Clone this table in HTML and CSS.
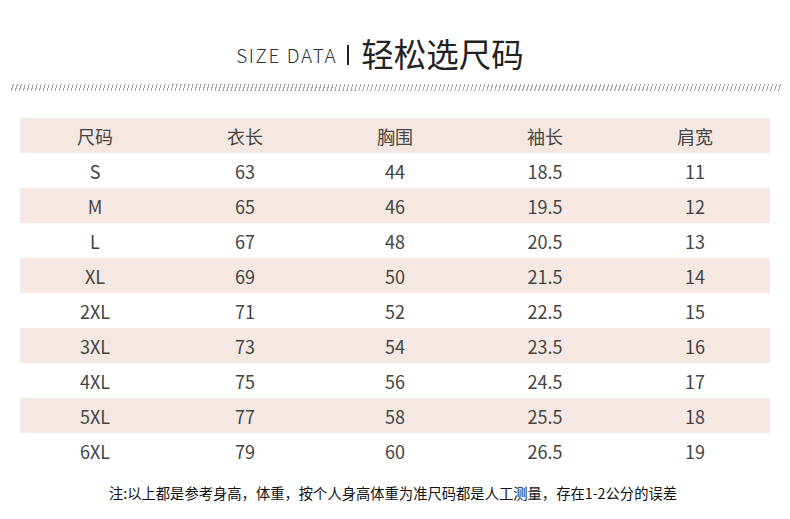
FILE: index.html
```html
<!DOCTYPE html>
<html lang="zh">
<head>
<meta charset="utf-8">
<link rel="stylesheet" href="styles.css">
</head>
<body>
<div class="page">
  <header class="title">
    <span class="title-en">SIZE DATA</span>
    <span class="title-bar"></span>
    <span class="title-cn">轻松选尺码</span>
  </header>
  <div class="slashes"></div>
  <table class="size-table">
    <thead>
      <tr><th>尺码</th><th>衣长</th><th>胸围</th><th>袖长</th><th>肩宽</th></tr>
    </thead>
    <tbody>
      <tr><td>S</td><td>63</td><td>44</td><td>18.5</td><td>11</td></tr>
      <tr><td>M</td><td>65</td><td>46</td><td>19.5</td><td>12</td></tr>
      <tr><td>L</td><td>67</td><td>48</td><td>20.5</td><td>13</td></tr>
      <tr><td>XL</td><td>69</td><td>50</td><td>21.5</td><td>14</td></tr>
      <tr><td>2XL</td><td>71</td><td>52</td><td>22.5</td><td>15</td></tr>
      <tr><td>3XL</td><td>73</td><td>54</td><td>23.5</td><td>16</td></tr>
      <tr><td>4XL</td><td>75</td><td>56</td><td>24.5</td><td>17</td></tr>
      <tr><td>5XL</td><td>77</td><td>58</td><td>25.5</td><td>18</td></tr>
      <tr><td>6XL</td><td>79</td><td>60</td><td>26.5</td><td>19</td></tr>
    </tbody>
  </table>
  <p class="note">注:以上都是参考身高，体重，按个人身高体重为准尺码都是人工测量，存在1-2公分的误差</p>
</div>
</body>
</html>
```
FILE: styles.css
```css
html, body {
  margin: 0;
  padding: 0;
  background: #fff;
}
body {
  font-family: "Noto Sans CJK SC", "Noto Sans", sans-serif;
  color: #444;
  width: 790px;
  height: 519px;
  overflow: hidden;
}
.page {
  display: flex;
  flex-direction: column;
  align-items: center;
}
.title {
  height: 84px;
  display: flex;
  align-items: center;
  justify-content: center;
  padding-top: 22px;
  padding-right: 30px;
  box-sizing: border-box;
}
.title-en {
  font-size: 19px;
  font-weight: 300;
  letter-spacing: 1.6px;
  color: #333;
  margin-top: 3px;
}
.title-bar {
  width: 2px;
  height: 20px;
  background: #222;
  margin: 4px 12px 0 10px;
}
.title-cn {
  font-size: 32.5px;
  font-weight: 400;
  color: #222;
  line-height: 40px;
}
.slashes {
  width: 772px;
  height: 7px;
  margin-left: 2px;
  margin-bottom: 27px;
  background-image: repeating-linear-gradient(108deg, #fff 0, #fff 2.7px, #a8a8a8 2.7px, #a8a8a8 3.8px);
}
.size-table {
  width: 750px;
  border-collapse: collapse;
  table-layout: fixed;
}
.size-table th,
.size-table td {
  height: 35px;
  padding: 0;
  text-align: center;
  vertical-align: middle;
  font-size: 18px;
  font-weight: 400;
  color: #444;
}
.size-table thead tr,
.size-table tbody tr:nth-child(even) {
  background: #f5e8e2;
}
.note {
  margin: 15px 0 0;
  padding-right: 4px;
  font-size: 14.3px;
  color: #111;
  line-height: 20px;
}
```
